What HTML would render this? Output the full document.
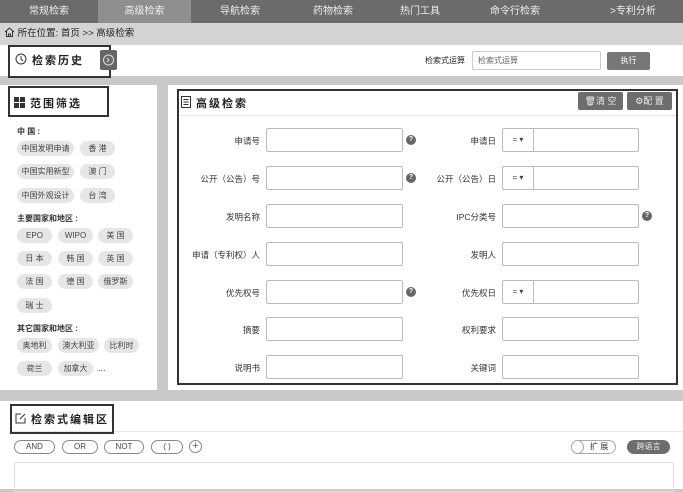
<!DOCTYPE html>
<html><head><meta charset="utf-8"><style>
*{margin:0;padding:0;box-sizing:border-box}
body{width:683px;height:489px;overflow:hidden;background:#c9c9c9;font-family:"Liberation Sans","Noto Sans CJK SC",sans-serif;font-size:9px;color:#333;position:relative}
.a{position:absolute}
.nav{left:0;top:0;width:683px;height:23px;background:#6b6b6b;}
.nav span{position:absolute;top:0;height:23px;line-height:23px;color:#eee;font-size:10px;text-align:center;width:100px}
.inp{position:absolute;background:#fff;border:1px solid #bbb;border-radius:2px;height:24px;width:137px}
.lbl{position:absolute;font-size:8.5px;color:#333;text-align:right;width:120px;line-height:24px}
.q{position:absolute;width:10px;height:10px;border-radius:50%;background:#666;color:#fff;font-size:7px;font-weight:bold;text-align:center;line-height:10px}
.sel{position:absolute;left:0;top:0;width:31px;height:22px;border-right:1px solid #bbb;font-size:8px;line-height:22px;text-align:center;color:#444}
.tag{position:absolute;height:15px;line-height:15px;background:#e6e6e6;border-radius:8px;font-size:8px;color:#444;text-align:center}
.blk{border:2px solid #333}
.pill{position:absolute;top:440px;height:14px;line-height:12px;border:1px solid #888;border-radius:7px;font-size:8px;text-align:center;color:#444;background:#fff}
</style></head><body>
<div class="a nav">
<span style="left:0;width:98px">常规检索</span>
<span style="left:98px;width:93px;background:#8f8f8f">高级检索</span>
<span style="left:190px">导航检索</span>
<span style="left:283px">药物检索</span>
<span style="left:370px">热门工具</span>
<span style="left:465px">命令行检索</span>
<span style="left:583px">&gt;专利分析</span>
</div>
<div class="a" style="left:0;top:23px;width:683px;height:22px;background:#d4d4d4;line-height:22px;font-size:9.5px;color:#222;padding-left:4px">
<svg width="11" height="10" style="vertical-align:-1px" viewBox="0 0 11 10"><path d="M1 5 L5.5 1 L10 5 M2.5 4 V9.5 H8.5 V4 M4.5 9.5 V7 H6.5 V9.5" fill="none" stroke="#333" stroke-width="1"/></svg> 所在位置: 首页 &gt;&gt; 高级检索</div>
<div class="a" style="left:0;top:45px;width:683px;height:31px;background:#fff"></div>
<div class="a blk" style="left:8px;top:45px;width:103px;height:33px"></div>
<div class="a" style="left:15px;top:52px;font-size:11px;font-weight:bold;letter-spacing:2px;color:#222"><svg width="12" height="12" viewBox="0 0 12 12" style="vertical-align:-1px"><circle cx="6" cy="6" r="5" fill="none" stroke="#333"/><path d="M6 3V6L8 8" fill="none" stroke="#333"/></svg> 检索历史</div>
<div class="a" style="left:100px;top:50px;width:17px;height:20px;background:#666;border-radius:2px"><svg width="17" height="20" viewBox="0 0 17 20"><circle cx="8.5" cy="10" r="5" fill="none" stroke="#ddd"/><path d="M7 8l2 2-2 2" fill="none" stroke="#ddd"/></svg></div>
<div class="a" style="left:425px;top:55px;font-size:8px;color:#222">检索式运算</div>
<div class="a" style="left:472px;top:51px;width:129px;height:19px;border:1px solid #ccc;border-radius:2px;font-size:8px;color:#666;line-height:17px;padding-left:5px;background:#fff">检索式运算</div>
<div class="a" style="left:607px;top:52px;width:43px;height:18px;background:#777;color:#fff;font-size:8px;text-align:center;line-height:18px;border-radius:2px">执行</div>

<div class="a" style="left:0;top:85px;width:157px;height:305px;background:#fff"></div>
<div class="a blk" style="left:8px;top:86px;width:101px;height:31px"></div>
<div class="a" style="left:14px;top:95px;font-size:11px;font-weight:bold;letter-spacing:2px;color:#222"><svg width="11" height="11" viewBox="0 0 11 11" style="vertical-align:-1px"><rect x="0" y="0" width="5" height="5" fill="#333"/><rect x="6" y="0" width="5" height="5" fill="#333"/><rect x="0" y="6" width="5" height="5" fill="#333"/><rect x="6" y="6" width="5" height="5" fill="#333"/></svg> 范围筛选</div>
<div class="a" style="left:17px;top:126px;font-size:8px;font-weight:bold">中 国 :</div>
<div class="tag" style="left:17px;top:141px;width:57px">中国发明申请</div><div class="tag" style="left:80px;top:141px;width:35px">香 港</div>
<div class="tag" style="left:17px;top:164px;width:57px">中国实用新型</div><div class="tag" style="left:80px;top:164px;width:35px">澳 门</div>
<div class="tag" style="left:17px;top:188px;width:57px">中国外观设计</div><div class="tag" style="left:80px;top:188px;width:35px">台 湾</div>
<div class="a" style="left:17px;top:213px;font-size:8px;font-weight:bold">主要国家和地区 :</div>
<div class="tag" style="left:17px;top:228px;width:35px">EPO</div><div class="tag" style="left:58px;top:228px;width:35px">WIPO</div><div class="tag" style="left:98px;top:228px;width:35px">美 国</div>
<div class="tag" style="left:17px;top:251px;width:35px">日 本</div><div class="tag" style="left:58px;top:251px;width:35px">韩 国</div><div class="tag" style="left:98px;top:251px;width:35px">英 国</div>
<div class="tag" style="left:17px;top:274px;width:35px">法 国</div><div class="tag" style="left:58px;top:274px;width:35px">德 国</div><div class="tag" style="left:98px;top:274px;width:35px">俄罗斯</div>
<div class="tag" style="left:17px;top:298px;width:35px">瑞 士</div>
<div class="a" style="left:17px;top:323px;font-size:8px;font-weight:bold">其它国家和地区 :</div>
<div class="tag" style="left:17px;top:338px;width:35px">奥地利</div><div class="tag" style="left:58px;top:338px;width:41px">澳大利亚</div><div class="tag" style="left:104px;top:338px;width:35px">比利时</div>
<div class="tag" style="left:17px;top:361px;width:35px">荷兰</div><div class="tag" style="left:58px;top:361px;width:35px">加拿大</div><div class="a" style="left:98px;top:363px;font-size:9px">...</div>

<div class="a" style="left:168px;top:85px;width:515px;height:305px;background:#fff"></div>
<div class="a blk" style="left:177px;top:89px;width:501px;height:296px"></div>
<div class="a" style="left:179px;top:115px;width:497px;height:1px;background:#e5e5e5"></div>
<div class="a" style="left:181px;top:95px;font-size:11px;font-weight:bold;letter-spacing:2px;color:#222"><svg width="10" height="12" viewBox="0 0 10 12" style="vertical-align:-1px"><rect x="0.5" y="0.5" width="9" height="11" fill="none" stroke="#333"/><path d="M2.5 3.5h5M2.5 6h5M2.5 8.5h5" stroke="#333"/></svg> 高级检索</div>
<div class="a" style="left:578px;top:92px;width:45px;height:18px;background:#6d6d6d;color:#eee;font-size:9px;line-height:18px;text-align:center;border-radius:2px">🗑清 空</div>
<div class="a" style="left:627px;top:92px;width:45px;height:18px;background:#6d6d6d;color:#eee;font-size:9px;line-height:18px;text-align:center;border-radius:2px">⚙配 置</div>

<div class="lbl" style="left:140px;top:129px">申请号</div><div class="inp" style="left:266px;top:128px"></div><div class="q" style="left:406px;top:135px">?</div>
<div class="lbl" style="left:376px;top:129px">申请日</div><div class="inp" style="left:502px;top:128px"><div class="sel">= ▾</div></div>
<div class="lbl" style="left:140px;top:167px">公开（公告）号</div><div class="inp" style="left:266px;top:166px"></div><div class="q" style="left:406px;top:173px">?</div>
<div class="lbl" style="left:376px;top:167px">公开（公告）日</div><div class="inp" style="left:502px;top:166px"><div class="sel">= ▾</div></div>
<div class="lbl" style="left:140px;top:205px">发明名称</div><div class="inp" style="left:266px;top:204px"></div>
<div class="lbl" style="left:376px;top:205px">IPC分类号</div><div class="inp" style="left:502px;top:204px"></div><div class="q" style="left:642px;top:211px">?</div>
<div class="lbl" style="left:140px;top:243px">申请（专利权）人</div><div class="inp" style="left:266px;top:242px"></div>
<div class="lbl" style="left:376px;top:243px">发明人</div><div class="inp" style="left:502px;top:242px"></div>
<div class="lbl" style="left:140px;top:281px">优先权号</div><div class="inp" style="left:266px;top:280px"></div><div class="q" style="left:406px;top:287px">?</div>
<div class="lbl" style="left:376px;top:281px">优先权日</div><div class="inp" style="left:502px;top:280px"><div class="sel">= ▾</div></div>
<div class="lbl" style="left:140px;top:318px">摘要</div><div class="inp" style="left:266px;top:317px"></div>
<div class="lbl" style="left:376px;top:318px">权利要求</div><div class="inp" style="left:502px;top:317px"></div>
<div class="lbl" style="left:140px;top:356px">说明书</div><div class="inp" style="left:266px;top:355px"></div>
<div class="lbl" style="left:376px;top:356px">关键词</div><div class="inp" style="left:502px;top:355px"></div>

<div class="a" style="left:0;top:401px;width:683px;height:88px;background:#fff"></div>
<div class="a" style="left:10px;top:431px;width:673px;height:1px;background:#e5e5e5"></div>
<div class="a blk" style="left:10px;top:404px;width:104px;height:30px"></div>
<div class="a" style="left:15px;top:411px;font-size:11px;font-weight:bold;letter-spacing:2px;color:#222"><svg width="11" height="11" viewBox="0 0 11 11" style="vertical-align:-1px"><path d="M6 1H1V10H10V5M5 6L10 1" fill="none" stroke="#333"/></svg> 检索式编辑区</div>
<div class="pill" style="left:14px;width:41px">AND</div>
<div class="pill" style="left:62px;width:36px">OR</div>
<div class="pill" style="left:104px;width:40px">NOT</div>
<div class="pill" style="left:151px;width:32px">( )</div>
<div class="a" style="left:189px;top:440px;width:13px;height:13px;border:1px solid #888;border-radius:50%;text-align:center;line-height:11px;font-size:11px;color:#666">+</div>
<div class="a" style="left:571px;top:440px;width:45px;height:14px;border:1px solid #aaa;border-radius:7px;font-size:8px;line-height:12px;padding-left:18px;background:#fff">扩 展</div>
<div class="a" style="left:571px;top:440px;width:13px;height:14px;border:1px solid #aaa;border-radius:50%;background:#fff"></div>
<div class="a" style="left:627px;top:440px;width:43px;height:14px;background:#6d6d6d;border-radius:7px;color:#eee;font-size:8px;line-height:14px;text-align:center">跨语言</div>
<div class="a" style="left:14px;top:462px;width:660px;height:30px;border:1px solid #ddd;border-radius:2px"></div>
</body></html>
